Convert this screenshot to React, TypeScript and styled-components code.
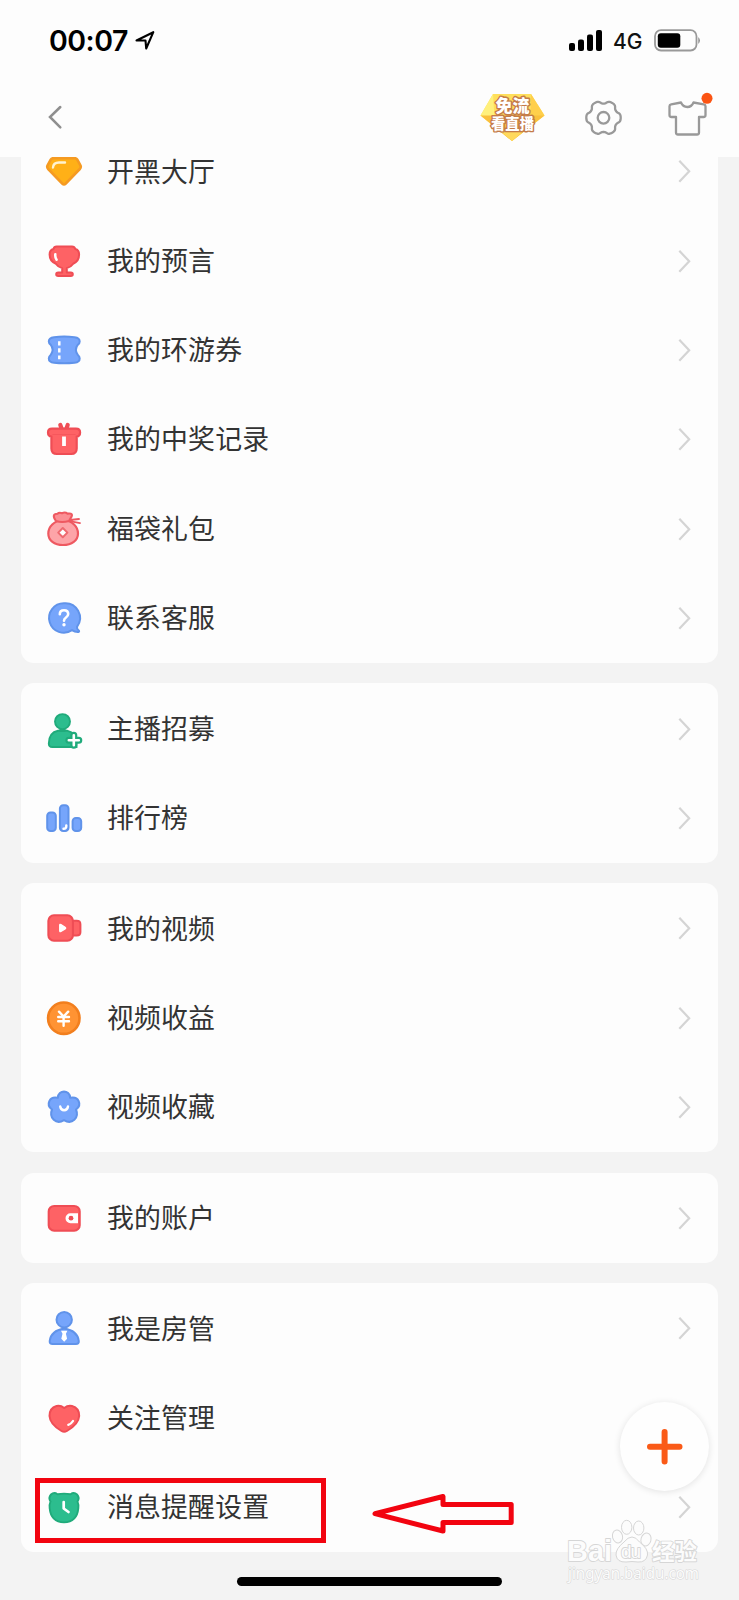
import React from 'react';
import styled, { createGlobalStyle } from 'styled-components';

const Global = createGlobalStyle`
  * { box-sizing: border-box; }
  html, body { margin: 0; padding: 0; background: #f3f3f3; }
`;

const Screen = styled.main`
  position: relative;
  width: 739px;
  height: 1600px;
  overflow: hidden;
  display: flex;
  flex-direction: column;
  background: #f3f3f3;
  font-family: 'Noto Sans CJK SC', sans-serif;
  color: #333;
`;

const Header = styled.header`
  flex: none;
  height: 157px;
  background: #fdfdfd;
  display: flex;
  flex-direction: column;
`;

const StatusBar = styled.div`
  height: 80px;
  display: flex;
  align-items: center;
  padding: 1px 38px 0 49px;
`;

const Time = styled.span`
  font: 600 28.5px/34px Inter, sans-serif;
  letter-spacing: -0.5px;
  color: #000;
  width: 85px;
  white-space: nowrap;
`;

const StatusRight = styled.div`
  margin-left: auto;
  display: flex;
  align-items: center;
`;

const Network = styled.span`
  font: 500 21px/26px Inter, sans-serif;
  color: #111;
  width: 40px;
  margin-left: 11px;
  padding-top: 3px;
`;

const NavBar = styled.nav`
  height: 77px;
  display: flex;
  align-items: flex-start;
  padding: 5px 26px 0 47px;
`;

const NavIcons = styled.div`
  margin-left: auto;
  display: flex;
  align-items: flex-start;
`;

const NavIcon = styled.svg<{ $gap?: number }>`
  display: block;
  flex: none;
  margin-left: ${(p) => p.$gap ?? 0}px;
`;

const List = styled.div`
  flex: 1;
  min-height: 0;
  overflow: hidden;
  display: flex;
  flex-direction: column;
  gap: 20.2px;
  padding: 0 21.3px;
`;

const Card = styled.section<{ $scrolled?: boolean }>`
  flex: none;
  background: #fdfdfd;
  border-radius: 13px;
  padding: 0.6px 0;
  margin-top: ${(p) => (p.$scrolled ? -30.9 : 0)}px;
`;

const Row = styled.div`
  height: 89.3px;
  display: flex;
  align-items: center;
  padding: 0 27px 0 22.7px;
`;

const RowIcon = styled.svg`
  width: 40px;
  height: 40px;
  flex: none;
  overflow: visible;
`;

const Label = styled.span`
  margin-left: 23px;
  margin-top: -1.6px;
  font-size: 26.9px;
  letter-spacing: 0.15px;
  line-height: 40px;
  flex: 1;
  white-space: nowrap;
`;

const AddButton = styled.button`
  position: absolute;
  left: 620px;
  top: 1402px;
  width: 89px;
  height: 89px;
  border: 0;
  padding: 0;
  border-radius: 50%;
  background: #fefefe;
  box-shadow: 0 1px 7px rgba(0, 0, 0, 0.11);
  display: flex;
  align-items: center;
  justify-content: center;
`;

const Highlight = styled.div`
  position: absolute;
  left: 35px;
  top: 1478px;
  width: 291px;
  height: 65px;
  border: 5px solid #f20410;
`;

const Pointer = styled.svg`
  position: absolute;
  left: 368px;
  top: 1488px;
`;

const HomeIndicator = styled.div`
  position: absolute;
  left: 237px;
  top: 1577px;
  width: 265px;
  height: 9px;
  border-radius: 5px;
  background: #000;
`;

const Watermark = styled.svg`
  position: absolute;
  left: 560px;
  top: 1510px;
`;

const RED = '#fe6265';
const RED_EDGE = '#ef4d55';
const BLUE = '#76a5fb';
const BLUE_EDGE = '#6093ea';
const GREEN = '#2cbd8e';
const GREEN_EDGE = '#20ab7b';

const icons: Record<string, React.ReactNode> = {
  gem: (
    <>
      <path d="M9.500 7.200h21q2 0 2.800 1.500l3.100 5.600q1 2-.6 3.700L21.800 32.500q-1.800 1.700-3.600 0L4.200 18q-1.600-1.700-.6-3.700l3.100-5.600Q7.500 7.200 9.500 7.200z" fill="#ffb017" stroke="#f59a22" strokeWidth="2.600" />
      <path d="M9 16.500q.3-5 6-5h6" fill="none" stroke="#fff3d0" strokeWidth="2.400" strokeLinecap="round" />
    </>
  ),
  trophy: (
    <>
      <path d="M12.500 5.600h15.500q2.500 0 3.300 2.400 3.800 1 3.800 5.500 0 6.500-5.600 9-2.500 3.600-6.700 4.600V31.600h4q2 0 2 1.700t-2 1.700H14.200q-2 0-2-1.700t2-1.700h4v-4.500q-4.200-1-6.700-4.600-5.900-2.500-5.900-9 0-4.500 3.900-5.500.6-2.400 3-2.400z" fill={RED} stroke={RED_EDGE} strokeWidth="2" strokeLinejoin="round" />
      <path d="M11.300 13.200q-.4 3.200 1.300 5.500" stroke="#fff" strokeWidth="2.500" strokeLinecap="round" fill="none" />
    </>
  ),
  ticket: (
    <>
      <path d="M10 7.200q10-1.200 20.500 0 5.200.6 5.200 4.300 0 1.800-1.800 3.200-4 5 0 10.300 1.800 1.400 1.800 3.500 0 3.700-5.200 4.300-10.500 1-20.500 0-5.200-.6-5.200-4.300 0-2.100 1.800-3.500 4-5.300 0-10.300-1.800-1.400-1.800-3.200 0-3.700 5.200-4.300z" fill={BLUE} stroke={BLUE_EDGE} strokeWidth="2" />
      <path d="M15.300 11.200v18" stroke="#fff" strokeWidth="2.500" strokeDasharray="4.200 2.900" />
    </>
  ),
  gift: (
    <>
      <path d="M17.800 10l-1.500-4M22.200 10l1.500-4" stroke={RED_EDGE} strokeWidth="4.200" strokeLinecap="round" />
      <path d="M8 9.600h24q4.100 0 4.100 3.900 0 3.600-3.400 4.200V29.500q0 5.500-5.500 5.500H12.900q-5.500 0-5.500-5.500V17.700Q4 17.100 4 13.500q0-3.900 4-3.900z" fill={RED} stroke={RED_EDGE} strokeWidth="2.200" />
      <path d="M8.500 15.500h23" stroke={RED_EDGE} strokeWidth="1" opacity=".5" />
      <path d="M20 17.500v9.500" stroke="#fff" strokeWidth="3.800" />
    </>
  ),
  bag: (
    <>
      <path d="M19 10.500c-9 1.500-14.700 7-14.700 14 0 7 6 11.500 14.700 11.500s15-4.500 15-11.500c0-7-5.500-12.500-15-14z" fill="#fda4a8" stroke="#ee5961" strokeWidth="2.200" />
      <path d="M12 12Q7 5 13.500 4.800q1.500-1.600 4.500-.6 3-1.600 5.500.4 6.500-1 3.500 4L25 12Q18 14 12 12z" fill="#fb8f94" stroke="#ee5961" strokeWidth="2.100" strokeLinejoin="round" />
      <path d="M26 11l9-1M27 12.300l9 1.800" stroke="#ee5961" strokeWidth="1.800" strokeLinecap="round" />
      <path d="M18.800 19l4.600 4.600-4.600 4.600-4.600-4.600z" fill="#fff" stroke="#ee6a70" strokeWidth="2" strokeLinejoin="round" />
    </>
  ),
  help: (
    <>
      <path d="M20 5.300a14.700 14.700 0 1 0 8 26.900q3 2 6.700 1.700 1-.6-.2-1.600-1.700-1.200-1.500-3.500A14.700 14.700 0 0 0 20 5.300z" fill={BLUE} stroke={BLUE_EDGE} strokeWidth="2" strokeLinejoin="round" />
      <path d="M15.800 16.300q0-4.100 4.200-4.100t4.200 3.900q0 2-2.200 3.400-2 1.300-2 3.300" fill="none" stroke="#fff" strokeWidth="2.600" strokeLinecap="round" />
      <circle cx="20" cy="26.800" r="1.700" fill="#fff" />
    </>
  ),
  recruit: (
    <>
      <path d="M4.800 34.500Q5 23.500 14 21.700q4.500-.9 9 0Q32.500 24 32.500 32v6H8.200q-3.400 0-3.400-3.500z" fill={GREEN} stroke={GREEN_EDGE} strokeWidth="1.900" />
      <path d="M15.500 18h6v5h-6z" fill={GREEN_EDGE} />
      <circle cx="18.500" cy="12.600" r="7.500" fill={GREEN} stroke={GREEN_EDGE} strokeWidth="1.900" />
      <path d="M29.800 26.300v10M24.800 31.300h10" stroke={GREEN_EDGE} strokeWidth="7" strokeLinecap="round" />
      <path d="M29.800 26.300v10M24.800 31.300h10" stroke="#fff" strokeWidth="2.600" strokeLinecap="round" />
    </>
  ),
  rank: (
    <>
      <g fill={BLUE} stroke={BLUE_EDGE} strokeWidth="2">
        <rect x="3.200" y="14.500" width="8.600" height="18.500" rx="3.300" />
        <rect x="15.900" y="7.200" width="8.600" height="25.800" rx="3.300" />
        <rect x="28.600" y="20" width="8.600" height="13" rx="3.300" />
      </g>
      <path d="M22.300 27.500q.2 3.300-2.800 3.300" stroke="#fff" strokeWidth="2.400" strokeLinecap="round" fill="none" />
    </>
  ),
  video: (
    <>
      <path d="M27 12.800h5.700q3.700 0 3.700 3.400v8q0 3.200-3.700 3.200H27z" fill={RED} stroke={RED_EDGE} strokeWidth="2" />
      <rect x="4.400" y="7.300" width="24.500" height="25.400" rx="5.500" fill={RED} stroke={RED_EDGE} strokeWidth="2.100" />
      <path d="M15.700 17.200v5.600q0 1.200 1.200.7l4.200-2.600q1.200-.9 0-1.700l-4.200-2.600q-1.200-.6-1.200.6z" fill="#fff" stroke="#fff" strokeWidth="1.300" />
    </>
  ),
  yen: (
    <>
      <circle cx="19.800" cy="20.200" r="15.700" fill="#ff9333" stroke="#f27f1e" strokeWidth="2.600" />
      <path d="M15 13.700l4.600 4.800 4.600-4.800M14.200 19h10.800M14.200 23.300h10.800M19.600 18.500v9.300" fill="none" stroke="#fff" strokeWidth="2.400" strokeLinecap="round" strokeLinejoin="round" />
    </>
  ),
  flower: (
    <>
      <path d="M13.800 10.800C14.500 2.500 25.500 2.500 26.200 10.800 34.500 9 38.500 17.500 32 22.500 35.500 31 28 38 20 33.200 12 38 4.700 31 8 22.500 1.500 17.500 5.500 9 13.800 10.800z" fill={BLUE} stroke={BLUE_EDGE} strokeWidth="2.100" strokeLinejoin="round" />
      <path d="M16.200 19.500q.6 3.700 3.900 3.700t3.900-3.700" stroke="#fff" strokeWidth="2.400" strokeLinecap="round" fill="none" />
    </>
  ),
  wallet: (
    <>
      <rect x="4.700" y="8" width="31" height="24.700" rx="5.500" fill={RED} stroke={RED_EDGE} strokeWidth="2.100" />
      <path d="M34 15.200H26.500a5 5 0 0 0 0 10H34z" fill="#fff" />
      <circle cx="27" cy="20.200" r="2.400" fill={RED_EDGE} />
    </>
  ),
  admin: (
    <>
      <path d="M8.500 36h23.500q3 0 2.800-3Q33.500 22.500 20.200 20.500 7 22.500 5.700 33 5.500 36 8.500 36z" fill={BLUE} stroke={BLUE_EDGE} strokeWidth="2" />
      <circle cx="20.200" cy="11.700" r="7.700" fill={BLUE} stroke={BLUE_EDGE} strokeWidth="2" />
      <path d="M17 22.700h6.400l-1.500 3 1.200 5-2.900 3-2.900-3 1.200-5z" fill="#fff" />
    </>
  ),
  heart: (
    <>
      <path d="M20.200 10Q24 7 28 8q7.300 2 7.200 10-.6 8.300-12.300 15-2.700 1.600-5.400 0Q6 26.300 5.500 18q0-8 7-10 4-1 7.700 2z" fill={RED} stroke={RED_EDGE} strokeWidth="2" strokeLinejoin="round" />
      <path d="M24.300 26.800q3-1 4.700-3.800" stroke="#fff" strokeWidth="2.300" strokeLinecap="round" />
    </>
  ),
  clock: (
    <>
      <path d="M13.500 7.200q6.500-1.200 13 0 3.500-2.400 6.500.3 3 3.300.5 7Q35 18 34.300 21.500q-1.300 13.500-14.300 13.900Q7 35 5.700 21.500 5 18 6.500 14.500q-2.400-3.700.5-7 3-2.700 6.500-.3z" fill={GREEN} stroke={GREEN_EDGE} strokeWidth="1.900" />
      <path d="M19.700 15v6.500l4.800 3.500" stroke="#fff" strokeWidth="2.700" strokeLinecap="round" strokeLinejoin="round" fill="none" />
    </>
  ),
};

const groups: [string, string][][] = [
  [
    ['gem', '开黑大厅'],
    ['trophy', '我的预言'],
    ['ticket', '我的环游券'],
    ['gift', '我的中奖记录'],
    ['bag', '福袋礼包'],
    ['help', '联系客服'],
  ],
  [
    ['recruit', '主播招募'],
    ['rank', '排行榜'],
  ],
  [
    ['video', '我的视频'],
    ['yen', '视频收益'],
    ['flower', '视频收藏'],
  ],
  [['wallet', '我的账户']],
  [
    ['admin', '我是房管'],
    ['heart', '关注管理'],
    ['clock', '消息提醒设置'],
  ],
];

const Chevron = () => (
  <svg width="13" height="24" viewBox="0 0 13 24">
    <path d="M1.300 1.800L11.200 12.300 1.300 22.800" fill="none" stroke="#d4d4d4" strokeWidth="2.200" />
  </svg>
);

/* Six-lobed cog outline, sampled from a cosine-modulated circle */
const cogPath = (cx: number, cy: number) => {
  const points: string[] = [];
  for (let i = 0; i < 120; i += 1) {
    const a = (i / 120) * Math.PI * 2;
    const wave = Math.tanh(1.5 * (Math.cos(6 * a) + 0.35)) / Math.tanh(2);
    const r = 15.5 + 1.7 * wave;
    points.push(`${(cx + r * Math.cos(a)).toFixed(2)},${(cy + r * Math.sin(a)).toFixed(2)}`);
  }
  return `M${points.join('L')}Z`;
};

export default function App() {
  return (
    <Screen>
      <Global />
      <Header>
        <StatusBar>
          <Time>00:07</Time>
          <svg width="22" height="22" viewBox="0 0 22 22">
            <path d="M2.500 10.500L19.300 2.200 12.200 18.500l-.7-8z" fill="none" stroke="#000" strokeWidth="2.100" strokeLinejoin="round" />
          </svg>
          <StatusRight>
            <svg width="34" height="22" viewBox="0 0 34 22">
              <rect x="1" y="13" width="6" height="8" rx="2" />
              <rect x="10" y="9.500" width="6" height="11.500" rx="2" />
              <rect x="19" y="4.500" width="6" height="16.500" rx="2" />
              <rect x="28" y="0" width="6" height="21" rx="2" />
            </svg>
            <Network>4G</Network>
            <svg width="48" height="24" viewBox="0 0 48 24">
              <rect x="2" y="1.200" width="41.500" height="20.300" rx="6" fill="none" stroke="#999" strokeWidth="1.800" />
              <rect x="4.800" y="4.200" width="22.500" height="14.500" rx="3" />
              <path d="M45.300 8q3.200 3.500 0 7z" fill="#888" />
            </svg>
          </StatusRight>
        </StatusBar>
        <NavBar>
          <NavIcon width="16" height="64" viewBox="0 0 16 64">
            <path d="M13.300 22L3 32l10.300 10.300" fill="none" stroke="#8f8f8f" strokeWidth="2.500" strokeLinecap="round" />
          </NavIcon>
          <NavIcons>
            <NavIcon width="70" height="64" viewBox="477 85 70 64">
              <path d="M493 94h38L544.500 115.500 512 141 480.500 115.500z" fill="#ffdf5c" />
              <path d="M493 94l-12.500 21.500 14 2z" fill="#fff07c" />
              <path d="M531 94l13.500 21.500-14 2z" fill="#ffcf4b" />
              <path d="M480.500 115.500h64L512 141z" fill="#fac03c" />
              <path d="M498 129h28L512 141z" fill="#ffd95c" />
              <g fill="#fff" stroke="#c47b49" strokeWidth="2.800" strokeLinejoin="round" paintOrder="stroke" fontFamily="'Noto Sans CJK SC', sans-serif" fontWeight="900" textAnchor="middle">
                <text x="512.500" y="112" fontSize="17">免流</text>
                <text x="512.500" y="129" fontSize="14.300">看直播</text>
              </g>
            </NavIcon>
            <NavIcon $gap={36} width="41" height="64" viewBox="583 85 41 64">
              <path d={cogPath(603.5, 117.8)} fill="none" stroke="#999" strokeWidth="2.300" strokeLinejoin="round" />
              <circle cx="603.500" cy="117.800" r="5.800" fill="none" stroke="#999" strokeWidth="2.300" />
            </NavIcon>
            <NavIcon $gap={42} width="47" height="64" viewBox="666 85 47 64">
              <path d="M681 102.500q2 4.500 6.300 4.500t6.200-4.500l10.300 1.800q1.700.4 1.700 2V115q0 2-2 2h-4.500v15.500q0 2-2 2H678q-2 0-2-2V117h-4.500q-2 0-2-2v-8.700q0-1.600 1.700-2z" fill="none" stroke="#999" strokeWidth="2.300" strokeLinejoin="round" />
              <circle cx="707" cy="98.300" r="5.500" fill="#fb5413" />
            </NavIcon>
          </NavIcons>
        </NavBar>
      </Header>
      <List>
        {groups.map((rows, i) => (
          <Card key={i} $scrolled={i === 0}>
            {rows.map(([icon, label]) => (
              <Row key={label}>
                <RowIcon viewBox="0 0 40 40">{icons[icon]}</RowIcon>
                <Label>{label}</Label>
                <Chevron />
              </Row>
            ))}
          </Card>
        ))}
      </List>
      <AddButton aria-label="add">
        <svg width="38" height="38" viewBox="0 0 38 38">
          <path d="M18.600 4v29.500M4 18.700h29.500" stroke="#fa5a17" strokeWidth="6" strokeLinecap="round" />
        </svg>
      </AddButton>
      <Highlight />
      <Pointer width="150" height="52" viewBox="368 1488 150 52">
        <path d="M375 1513.700L443 1496.500v8h68.200v18H443v8.500z" fill="none" stroke="#f20410" strokeWidth="5" strokeLinejoin="round" />
      </Pointer>
      <HomeIndicator />
      <Watermark width="150" height="80" viewBox="560 1510 150 80">
        <g fill="#fcfcfc" stroke="#d6d6d6" strokeWidth="1">
          <ellipse cx="617.500" cy="1536.500" rx="5" ry="6.500" transform="rotate(-15 617.5 1536.5)" />
          <ellipse cx="626.700" cy="1527.300" rx="5.200" ry="7" />
          <ellipse cx="638.700" cy="1528" rx="5.200" ry="7" />
          <ellipse cx="646" cy="1539.500" rx="5" ry="6.500" transform="rotate(15 646 1539.5)" />
          <path d="M632 1537q4 0 7.500 5 9 7 8 13-1.500 7.500-9.500 7-6-1-12 0-9 .5-10-7-.5-6 8-13 4-5 8-5z" />
        </g>
        <g fill="#fcfcfc" stroke="#d6d6d6" strokeWidth="1.800" paintOrder="stroke" strokeLinejoin="round">
          <text x="567" y="1561" fontFamily="'Liberation Sans', sans-serif" fontWeight="700" fontSize="30" textLength="45" lengthAdjust="spacingAndGlyphs">Bai</text>
          <text x="621" y="1558" fontFamily="'Liberation Sans', sans-serif" fontSize="19" textLength="20">du</text>
          <text x="652" y="1560" fontFamily="'Noto Sans CJK SC', sans-serif" fontWeight="700" fontSize="22.500">经验</text>
          <text x="568" y="1579" fontFamily="'Noto Sans', sans-serif" fontSize="17" strokeWidth="1.200" textLength="131" lengthAdjust="spacingAndGlyphs">jingyan.baidu.com</text>
        </g>
      </Watermark>
    </Screen>
  );
}
